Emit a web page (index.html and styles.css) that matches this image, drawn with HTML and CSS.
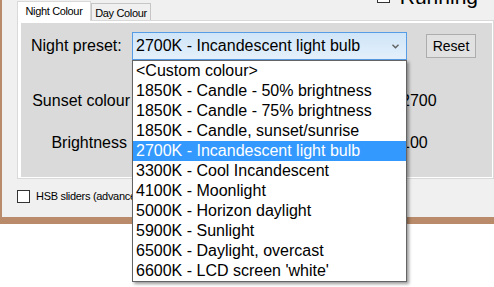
FILE: index.html
```html
<!DOCTYPE html>
<html>
<head>
<meta charset="utf-8">
<link rel="stylesheet" href="styles.css">
</head>
<body>
<div class="window">
  <div class="top">
    <div class="tabs">
      <div class="tab active">Night Colour</div>
      <div class="tab">Day Colour</div>
    </div>
    <div class="running"><span class="cb"></span><span>Running</span></div>
  </div>
  <div class="panel">
    <div class="page">
      <div class="preset">
        <span class="lbl">Night preset:</span>
        <div class="combo">2700K - Incandescent light bulb
          <svg class="chev" width="7" height="5" viewBox="0 0 7 5"><path d="M0.5 0.8 L3.5 3.8 L6.5 0.8" fill="none" stroke="#606060" stroke-width="1.4"/></svg>
        </div>
        <button class="reset">Reset</button>
      </div>
      <div class="srow first">
        <span class="lbl">Sunset colour</span>
        <span class="track"></span>
        <span class="val">2700</span>
      </div>
      <div class="srow">
        <span class="lbl short">Brightness</span>
        <span class="track"></span>
        <span class="val">100</span>
      </div>
    </div>
  </div>
  <div class="hsb"><span class="cb"></span><span>HSB sliders (advanced)</span></div>
</div>
<ul class="list">
  <li>&lt;Custom colour&gt;</li>
  <li>1850K - Candle - 50% brightness</li>
  <li>1850K - Candle - 75% brightness</li>
  <li>1850K - Candle, sunset/sunrise</li>
  <li class="sel">2700K - Incandescent light bulb</li>
  <li>3300K - Cool Incandescent</li>
  <li>4100K - Moonlight</li>
  <li>5000K - Horizon daylight</li>
  <li>5900K - Sunlight</li>
  <li>6500K - Daylight, overcast</li>
  <li>6600K - LCD screen 'white'</li>
</ul>
</body>
</html>
```
FILE: styles.css
```css
* { box-sizing: border-box; }
html, body { margin: 0; padding: 0; background: #fff; overflow: hidden; }
body {
  width: 494px;
  height: 287px;
  position: relative;
  font-family: "Liberation Sans", Arial, sans-serif;
  color: #000;
}
.window {
  background: #f0f0f0;
  border-left: 2px solid #b98b6b;
  border-bottom: 7px solid #b98b6b;
}
.top { display: flex; height: 20px; }
.tabs { display: flex; align-items: flex-end; margin-left: 15px; height: 20px; }
.tab {
  font-size: 11px;
  letter-spacing: -0.35px;
  border: 1px solid #c6c6c6;
  border-bottom: 0;
  background: #f0f0f0;
  height: 17px;
  width: 60px;
  display: flex;
  align-items: center;
  justify-content: center;
  padding-top: 1px;
}
.tab.active {
  background: #fff;
  border-color: #d9d9d9;
  height: 20px;
  width: 74px;
  margin-bottom: -1px;
  position: relative;
  z-index: 1;
  padding-top: 0;
  padding-bottom: 2px;
}
.running {
  margin-left: auto;
  margin-right: 16px;
  margin-top: -15px;
  display: flex;
  align-items: flex-start;
  font-size: 21px;
  line-height: 24px;
  height: 24px;
}
.running .cb { margin-top: 5px; margin-right: 10px; }
.cb {
  width: 13px;
  height: 13px;
  border: 1px solid #333;
  background: #fff;
  flex: none;
}
.panel {
  margin-left: 15px;
  width: 477px;
  border: 1px solid #d9d9d9;
  background: #fff;
  padding: 2px 0 1px 3px;
}
.page {
  background: #dadada;
  width: 471px;
  height: 154px;
  padding: 9px 0 0 10px;
}
.preset { display: flex; align-items: center; height: 28px; }
.lbl { font-size: 16px; flex: none; }
.preset .lbl { width: 101px; }
.combo {
  width: 275px;
  height: 28px;
  border: 1px solid #569de5;
  background: linear-gradient(#cfe5f8, #e4f0fb);
  display: flex;
  align-items: center;
  padding-left: 3px;
  font-size: 16px;
  position: relative;
  flex: none;
}
.chev { position: absolute; right: 7px; top: 11px; }
.reset {
  margin-left: 19px;
  width: 50px;
  height: 24px;
  border: 1px solid #adadad;
  background: #e1e1e1;
  font-family: "Liberation Sans", Arial, sans-serif;
  font-size: 14px;
  padding: 0;
  color: #000;
}
.srow { display: flex; align-items: center; height: 40px; margin-left: -10px; margin-top: 2px; }
.srow.first { margin-top: 21px; }
.srow .lbl { width: 110px; text-align: right; padding-right: 1px; }
.srow .lbl.short { padding-right: 4px; }
.track { width: 270px; flex: none; }
.val { font-size: 16px; }
.hsb {
  display: flex;
  align-items: center;
  margin: 11px 0 0 15px;
  padding-bottom: 14px;
  font-size: 11px;
  line-height: 13px;
  letter-spacing: -0.3px;
}
.hsb .cb { margin-right: 6px; }
.list {
  position: absolute;
  left: 132px;
  top: 60px;
  width: 275px;
  margin: 0;
  padding: 0;
  list-style: none;
  background: #fff;
  border: 1px solid #646464;
  box-shadow: 2px 2px 3px rgba(0, 0, 0, 0.4);
  font-size: 16px;
}
.list li {
  height: 20px;
  line-height: 20px;
  padding-left: 3px;
  white-space: nowrap;
}
.list li.sel { background: #3399ff; color: #fff; }
```
